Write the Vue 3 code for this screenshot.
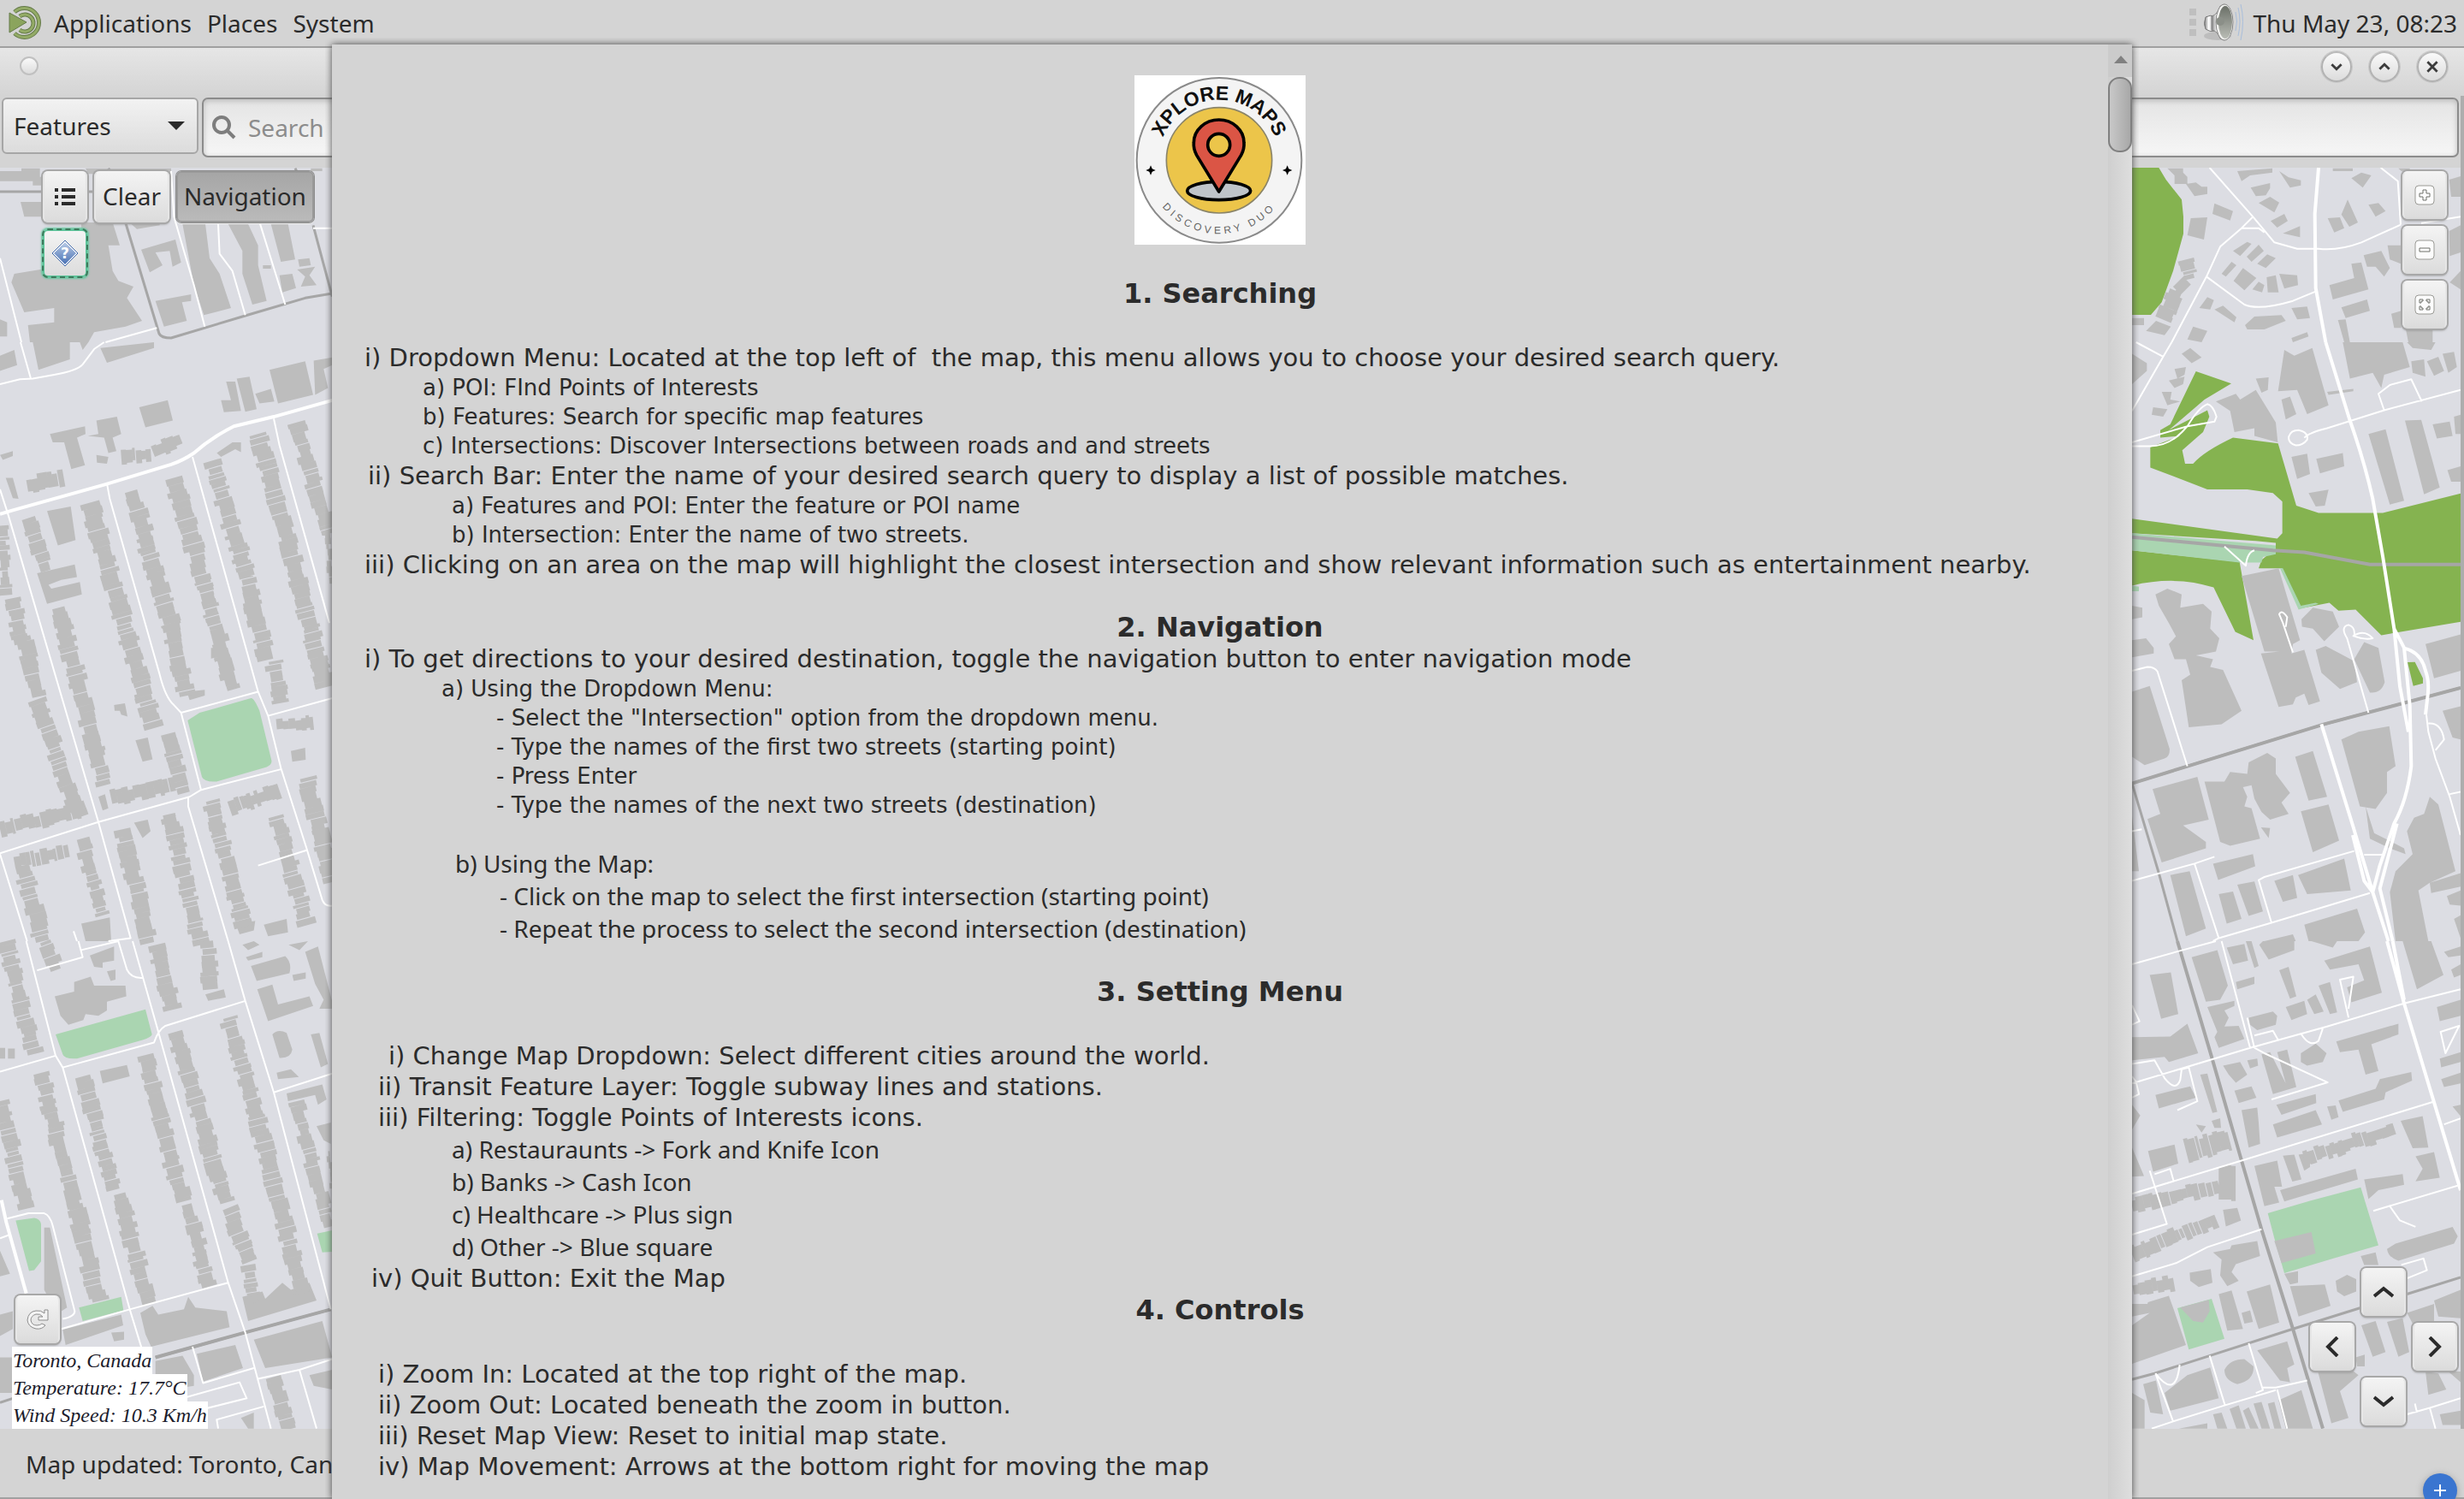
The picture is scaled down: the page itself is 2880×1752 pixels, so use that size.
<script setup>
// Each tile carries its own drawing grid; [originX, originY, scaleX, scaleY].
const grid = {
  a: [0, 0, 1 / 3, 1 / 3],
  b: [0, 400, 1 / 3, 1 / 2.24],
  c: [0, 1100, 1 / 3, 1 / 2.405],
  d: [2440, 0, 1 / 3, 1 / 3],
  e: [2480, 400, 1 / 3, 1 / 2.24],
  f: [2480, 1100, 1 / 3, 1 / 2.405]
}

const tiles = [
  {
    id: 'a',
    buildings:
      'M0 600H75V590H140V620H165V650H115V635H0ZM72 708H150V760H85ZM285 780H395L420 860H380L395 950L415 985L468 1005L445 1045L498 1125L440 1145L330 1165L310 1200H105L98 1140L190 1130V1080L85 1095L40 990L50 960L200 935L205 800H285ZM300 590H600V610H310ZM1090 590H1130V600H1090ZM0 1120L25 1130V1180H0ZM495 875L615 840L635 920L605 935L595 880L545 885L570 930L525 955ZM545 1055L670 1032V1055L638 1060L655 1125L575 1145ZM640 785H720L735 905L770 960L810 1080L715 1105L680 1000ZM800 785H870L905 860V930L935 1055L885 1068L850 960V880ZM950 785H1010L1035 910L985 918ZM980 965L1025 960L1038 1010L990 1025ZM1045 910L1085 905L1090 930L1050 935ZM1042 945L1105 935L1085 965L1110 1000L1055 1005L1070 970ZM922 930H950V942H922ZM460 785H560V790L480 803Z',
    thin: 'M600 600L610 760L680 1000L718 1145M765 785L770 890L815 950L860 1105M912 785L1000 1068M0 905L75 1200M370 1200L550 1150M1098 800H1165',
    grey: 'M0 672H160M305 672H330M440 780L558 1170Q565 1185 600 1185L860 1107L1070 1045L1160 1030M1098 790L1165 1040M380 590L400 620M1035 590L1045 610'
  },
  {
    id: 'b',
    park: 'M658 990L700 970L880 932Q890 930 910 965L952 1095Q955 1105 935 1112L760 1150Q715 1152 708 1138Z',
    buildings:
      'M115 0H245V45L135 72ZM280 0H310L290 20ZM352 15L540 0V15L375 54ZM0 35L50 20L60 60L0 75ZM175 240L298 220L300 240L270 250L298 322L250 332L225 262L185 262ZM308 245L345 240L338 205L410 195L425 240L395 250L408 285L380 290L365 250ZM338 295L380 300L375 318L340 315ZM488 170L588 152L606 205L510 223ZM775 152H810L793 103H825L845 180L785 183ZM830 95L875 90L900 175L860 182ZM895 135L950 122L962 155L910 160ZM945 72L1070 50L1098 138L975 160ZM1100 48L1165 40V60L1135 70L1150 120L1105 138ZM0 295L45 285V298L10 308ZM20 355H45L65 410L45 408ZM165 442L248 430L265 518L203 532ZM130 605L262 582L270 615L215 622L170 635L180 645L280 628L287 660L165 685ZM400 950L438 945L447 980L425 975L420 965L402 965ZM475 1042L518 1035L535 1092L500 1098ZM345 1190L368 1183L380 1220L360 1226ZM760 290L815 262L845 262V288L825 280L775 300ZM1020 1070L1070 1062L1072 1093L1025 1098ZM470 1258L518 1250L528 1280L500 1298ZM285 1522L385 1506L390 1568H300ZM828 1525L895 1515L890 1540L840 1550ZM925 1525L1005 1510L1010 1545L940 1555ZM740 800H790V820L740 828ZM655 915L718 910V925L665 937Z',
    thin: 'M0 110L70 97L115 95L190 85Q270 75 290 58L330 18L365 0M72 0L108 95M0 385L28 450L345 1256L458 1560L380 1568M375 370L385 410L560 870Q580 930 610 950L635 970L705 1172M635 970L905 915M675 300L905 915L940 978L985 1115L1075 1325L1130 1460Q1140 1478 1165 1475M940 978L1165 932M0 1338L345 1256L665 1190L705 1172L985 1118M660 1190V1215L800 1568M960 200L980 270L1155 735M905 1370L1075 1330M0 1340L95 1568M258 1542L270 1568',
    main: 'M0 450L45 440L370 372L600 320Q640 310 680 290Q740 250 820 220L960 195L1165 152',
    rows: [
      [5, 480, 22, 650, 14], [45, 670, 75, 780, 20], [85, 770, 130, 920, 20], [130, 935, 270, 1230, 20], [100, 460, 160, 600, 18], [205, 695, 365, 1150, 21],
      [315, 420, 540, 1010, 22], [590, 1025, 640, 1170, 20], [460, 390, 600, 740, 22], [600, 740, 650, 920, 20], [610, 355, 680, 540, 24], [680, 540, 815, 905, 20],
      [745, 310, 860, 600, 22], [860, 600, 930, 820, 21], [960, 835, 985, 940, 20], [905, 240, 1010, 520, 21], [1010, 520, 1140, 900, 22], [1040, 210, 1150, 500, 19],
      [1150, 500, 1160, 620, 8], [95, 375, 210, 360, 20], [425, 300, 515, 295, 16], [535, 285, 620, 260, 16], [390, 1195, 600, 1160, 18], [0, 1275, 290, 1225, 18],
      [50, 1360, 230, 1335, 16], [970, 1005, 1095, 995, 14], [805, 1220, 980, 1175, 18], [80, 1370, 150, 1568, 21], [285, 1300, 360, 1500, 18], [430, 1275, 520, 1568, 21],
      [595, 1235, 700, 1568, 20], [740, 1200, 855, 1530, 20], [970, 1240, 1070, 1510, 20], [1075, 1140, 1160, 1400, 20]
    ]
  },
  {
    id: 'c',
    park: 'M195 262L510 192L533 262Q530 270 500 278L270 330Q225 332 220 318ZM55 785L120 778Q140 780 144 795V900L120 925L102 927ZM277 1030L425 1000L433 1038L290 1068ZM1112 822L1165 813V873L1130 875Z',
    buildings:
      'M192 155L260 142V115L318 100L330 125L440 125L443 155L375 170V195L345 210L300 205L292 222L240 235L212 210ZM315 40L400 15V55L360 60V75L330 72ZM375 85L405 80V108L388 112ZM0 300H18V330H0ZM28 302H52V330H28ZM155 805H175L235 1030L215 1040L175 1010L155 980ZM850 10L890 0L910 10L870 25ZM862 45L920 30V45L870 55ZM880 70L1000 42Q1025 60 1015 90L900 112ZM1025 95L1072 88V105L1030 112ZM1070 30L1115 15L1165 170V190H1120L1135 165L1105 120ZM902 135L955 122L975 178L1085 155L1098 182L940 225ZM955 262Q975 245 1005 258L1025 305Q1020 330 980 328ZM1090 262L1120 258L1150 345L1125 355ZM970 370L1020 360L1048 382L975 388ZM1005 428L1130 403L1145 445L1115 460L1105 432L1010 450ZM1110 520L1160 510V570L1135 560ZM1012 10L1080 0L1050 25ZM720 150L785 135L792 158L730 168ZM350 365L445 348L455 380L360 400ZM492 1045L535 1025L555 1050L645 1035L660 1000L685 1030L795 1040L805 1085L530 1140L510 1105ZM0 1050L45 1040V1090L0 1110ZM220 1092L425 1050L432 1080L230 1135ZM0 1170H42V1270H0ZM545 1180L640 1165L680 1220V1250L640 1255V1330H545ZM690 1160L825 1135L852 1200L712 1238ZM850 1000L920 985L930 1005L990 960L1020 980L1085 960L1110 1010L870 1068ZM890 1120L1130 1068L1165 1170L930 1200ZM390 1100L435 1098V1120L400 1125ZM1085 1220L1165 1205V1260L1100 1250ZM845 1340L890 1325V1370H870ZM0 870L35 935L0 942Z',
    thin: 'M92 0L195 322L220 355L455 1035L497 1145M0 367L195 322M130 82L290 45L275 0M285 25L415 0L445 80Q460 105 500 103M465 0L550 240L800 960L860 1100L950 1370M220 355L540 285Q555 250 580 238L860 168M800 0L860 168L960 425L1160 1035M960 425L1165 372M215 1090L455 1035L800 960M0 835L35 825M25 780L100 765H155Q175 770 185 800L262 1040Q262 1055 220 1062M675 1140L712 1242L890 1200M905 1230L1050 1205L1165 1175M1050 1205L1110 1370M640 1285L840 1240L865 1285L640 1330M765 1370L760 1345L925 1308',
    main: 'M5 728L22 790L92 990',
    grey: 'M545 1170L860 1100L1160 1035M0 1297L45 1285',
    greyWide: 'M545 1170L860 1100L1160 1035',
    rows: [
      [20, 0, 120, 315, 20], [145, 370, 260, 740, 20], [265, 740, 345, 1010, 22], [0, 450, 90, 740, 20], [290, 380, 400, 700, 20], [420, 710, 515, 1005, 20], [510, 320, 545, 430, 18],
      [545, 440, 640, 730, 21], [655, 740, 730, 960, 19], [550, 10, 605, 195, 20], [615, 255, 790, 730, 21], [800, 750, 870, 890, 21], [870, 910, 890, 1010, 18], [725, 0, 740, 125, 20],
      [800, 215, 900, 490, 20], [900, 490, 1060, 990, 21], [160, 0, 190, 65, 18], [1040, 450, 1150, 800, 17], [960, 1225, 1010, 1370, 20], [1155, 590, 1165, 700, 8]
    ]
  },
  {
    id: 'd',
    wood: 'M155 588H250L275 630L330 700L336 760V820L300 950L260 1060L222 1104H155Z',
    buildings:
      'M280 590H335V605L350 620V645H305V615ZM345 645L380 640L400 655H420V680L375 688ZM445 713L510 740L500 773L438 750ZM362 765L420 762L408 840L350 825ZM525 600L648 590V605L570 615L540 635ZM672 600L705 622L748 632V650L710 658ZM572 658L640 642V660L625 685L590 688ZM600 712L640 690L672 710L655 745ZM642 775L690 750L702 775L665 798ZM685 818L745 793V832ZM510 880L560 848L575 855L535 898ZM558 900L600 858L618 880L575 918ZM595 925L630 892L660 905L625 940ZM470 960L505 918L522 930L485 970ZM512 985L545 940L592 975L550 1018ZM578 1015L600 988L620 1000L612 1025ZM628 972L660 965L670 1025H632ZM672 960L735 965L738 1000L690 1012ZM925 625L960 605L995 615L965 658ZM842 765L885 762L900 800L865 815ZM890 752L912 700L948 780L918 795ZM985 718L1020 712L1045 740L1010 760ZM968 895L1030 880L1060 940L1040 970L1010 935L980 935ZM1052 860H1098V925L1060 910ZM848 1000L935 975L925 925L960 920L985 1015L860 1050ZM890 1078L980 1050L990 1090L905 1115ZM1065 1100L1100 1090V1150H1075ZM1268 630L1308 618V690L1275 690ZM1268 810L1308 790V885L1270 898ZM1270 990L1308 950V1015ZM878 1122L905 1120L920 1200H900ZM1115 1150H1210V1200H1125ZM392 1080L420 1042L443 1052L430 1085ZM445 1085L475 1072L522 1112L515 1130ZM552 1140L585 1110L680 1105L695 1125L620 1155H560ZM715 1080L770 1075L780 1115L735 1120ZM350 1190L370 1145L420 1160L400 1200ZM205 1160L240 1125L292 1145L270 1175ZM715 1185L770 1165L775 1180L720 1200ZM155 1115H198V1140H155ZM860 590H930V600H860ZM1090 590H1130V600H1100Z',
    thin: 'M428 588L580 760L655 850L735 872H810Q880 880 960 850L1098 788M580 760L540 800L465 865L417 970L295 1200M540 800H600L620 815M417 970L550 1068Q600 1090 720 1055L800 1022M1028 588L1088 635L1098 788M1170 782L1308 760',
    main: 'M810 588L797 750L800 1010L835 1200',
    rows: [[345, 910, 360, 970, 16], [320, 985, 340, 1005, 20], [310, 1020, 270, 1115, 20]]
  },
  {
    id: 'e',
    wood: 'M260 76L384 108L290 150L165 230L300 178L307 195L285 235L212 283L222 318H250Q290 285 390 250L548 265L612 428L690 447H915L1188 396V732L910 767L820 700L760 703L728 682L625 697L562 592H480L490 570L540 540V525L470 520L36 500V462L545 514L563 500V417L530 395L440 385H300L100 328V275L205 245L135 250V230L170 215ZM36 545L413 575L462 780L398 758L322 642Q190 610 36 637ZM1002 838L1028 837L1056 880V893L1022 900Z',
    park: 'M36 500L540 532V555L495 562L490 577H413L36 545ZM36 637L60 640V652H36ZM555 592H565L628 690L680 682L690 685L620 700Z',
    buildings:
      'M210 30L240 15L280 40L245 55ZM36 30L88 55V75L36 110ZM185 70L225 65L220 85L195 95ZM165 100L220 90L215 110L185 120ZM140 130H175L170 150L205 155L160 165ZM110 170L160 175L145 195L105 190ZM470 95L515 92L512 125L490 132ZM330 155L400 135L415 150L470 125L540 210L547 262L465 245V225L395 235L380 180ZM570 20L605 35L668 15L725 165L650 188L615 125L548 128ZM720 130L812 122V128L725 138ZM560 150L590 142L612 188L575 202ZM775 0H985L1010 65L920 85L910 120L880 80L800 95ZM1000 0H1100L1085 20L1020 15ZM1015 50L1060 45L1065 90L1020 80ZM1070 50L1110 38L1130 75L1095 88ZM1125 30L1165 25L1175 65L1145 80ZM595 300L650 292L660 345L615 358ZM682 305L775 290L780 325L695 343ZM655 395L725 386L712 428L680 430ZM865 240L925 228L990 415L940 425ZM993 205L1050 203L1115 380L1060 398ZM1090 215L1150 208L1160 245L1105 252ZM1142 335L1188 325V365H1155ZM1165 195L1188 190V240H1170ZM420 612L550 592L625 780L600 790L595 815L640 805L695 940L655 950L640 920L610 930L600 948L550 955L488 815L552 810L500 810ZM118 660L160 645L210 660L205 695L285 685L315 705L310 750L342 775L330 810L260 820L320 830L310 850L355 858L420 965L350 1000L235 1008L210 885L240 870L225 830L185 830L165 790L190 770L165 735L130 690ZM36 690L72 695V720L36 725ZM36 780L85 775L112 800V815L36 825ZM630 725L670 695L740 705L762 745L710 783L670 750L632 745ZM680 805L715 795L815 835L825 890L765 908L700 865ZM815 830L850 785L900 800L922 890Q910 920 870 917ZM1065 790L1188 765V860L1095 880ZM36 915L98 900L168 1065Q168 1085 150 1090L80 1107L36 1085ZM1125 965L1188 953V1040L1160 1035ZM770 1040L830 1020L938 1005L960 1110L930 1125V1180L890 1222L835 1215ZM108 1170L265 1138L305 1250L215 1265L295 1308V1325L140 1362L90 1248L135 1235ZM290 1150L360 1150L380 1125L440 1130L445 1100L510 1075L540 1090V1130L590 1180L560 1205L585 1235L520 1250L490 1230L465 1195L455 1160L425 1165L440 1190L430 1215L455 1220L485 1300L380 1318L345 1308ZM608 1085L670 1070L720 1190L655 1200ZM628 1228L725 1210L762 1305L670 1335ZM488 1270L520 1272L515 1298ZM855 1215L885 1285L990 1325L995 1340L940 1325L870 1300ZM1000 1280L1025 1245L1060 1235L1080 1190L1110 1210L1170 1385L1080 1415L1040 1435L1075 1568H960L940 1440L960 1385L1020 1340ZM320 1365L460 1340L468 1372L338 1408ZM170 1395L238 1385L295 1535L225 1555ZM340 1445L390 1438L420 1510L368 1522ZM405 1420L465 1412L495 1490L445 1502ZM535 1410L600 1395L615 1455L565 1465ZM618 1395L780 1352L803 1435L650 1445ZM640 1525L825 1483L853 1545L830 1568H655ZM1080 1415L1188 1390V1425L1085 1442ZM1140 1450L1188 1435V1475L1150 1472ZM36 1240L60 1385H36ZM500 1568L600 1550L610 1568ZM1165 1510L1188 1500V1560Z',
    thin: 'M50 0L145 38L36 180M175 0L145 38M36 262L230 220L325 208L332 195Q320 165 300 162Q270 170 230 220Q170 275 90 272H36M640 250Q660 235 720 225L920 178L1188 125M920 178L900 135L940 112L1015 97L1052 155M36 860L90 850Q115 850 125 862L230 1110M360 535L435 585Q440 550 465 545M600 812L565 735L552 712Q560 698 580 720L575 745M865 970L790 775Q765 745 795 740Q820 745 815 770M810 770Q850 750 880 775Q850 780 810 768M1068 975L1075 1020L1100 1090L1150 1190L1188 1290M1075 998Q1120 995 1130 1040L1100 1068M1150 1183L1188 1177M36 1410L255 1365L325 1347M255 1365L340 1560L320 1568M340 1560L525 1520L870 1442M525 1520L480 1408L500 1400L815 1332M850 1342H920M36 1280L70 1275',
    loops: 'M585 250Q590 230 620 230Q655 235 650 255Q635 270 610 270Q585 265 585 250',
    main: 'M715 0L800 205Q850 310 880 410L915 560L955 750L975 900L1005 1020M955 750L990 800L1010 950L1015 1110Q1000 1200 955 1260L905 1370L880 1440M985 800Q1050 810 1065 860Q1080 890 1072 930L1065 975M700 1000L810 1265L880 1440L935 1568M810 1290L850 1410L880 1440M965 1260L905 1430L950 1568',
    grey: 'M36 1155L230 1110L710 1000L860 970L1188 905M36 1155L130 1390L195 1568',
    greyWide: 'M36 510L530 545L640 550L870 582H1188M36 1155L230 1110L710 1000L1188 905'
  },
  {
    id: 'f',
    park: 'M512 765L660 730L838 692L900 855L740 892L570 933L535 835ZM195 1032L315 1005L360 1118L235 1148Z',
    buildings:
      'M245 45L335 25L372 125L345 165L295 170ZM368 18L430 8L443 55L390 65ZM435 0L455 0L480 70L465 75ZM482 10L495 0H605V25L515 52ZM400 115L465 100V120L405 135ZM98 95L172 88L198 205L138 218ZM36 270L170 268L230 232L268 315L165 340L150 325L36 335ZM300 185L395 168V182L360 195L375 215L360 240L410 238L430 275L340 300L325 270L335 255ZM552 82L585 72L612 155L590 162ZM575 185L640 168L650 205L595 222ZM650 165L680 150L708 198L675 205ZM690 125L730 115L755 200L730 205ZM710 55L870 15L912 145L805 172L790 130L850 110L830 65L730 80ZM445 215L530 198L545 210L540 235L475 250L450 235ZM665 0L755 0L740 18ZM985 0H1085L1128 95L1035 135ZM1130 30L1188 15V40L1145 45ZM1155 80L1188 65V95L1165 102ZM1105 185L1188 165V210L1115 225ZM1115 330L1188 312V340L1120 355ZM1120 388L1188 370V400L1130 410ZM1160 465L1188 460V492ZM118 432L240 408L260 440L130 470ZM275 375L300 372L335 480L318 483ZM355 350L415 340L440 375L400 398L375 375ZM395 420L455 408L472 440L410 455ZM440 335L475 330L478 350L450 358ZM490 318L520 312L575 400L545 312L580 305L612 410L530 430ZM628 315L680 288L718 315L705 340L650 350L628 340ZM752 282L970 232V262L875 290L900 365L855 375L830 305L765 312ZM760 448L890 415L905 388L1015 368L1018 392L925 425L920 445L775 480ZM542 460L680 430L682 455L560 488ZM530 515L680 475L702 515L545 552ZM720 465L750 462L760 495L735 502ZM420 475L475 468L480 510L485 570L445 580ZM92 590L185 572L198 625L110 648ZM36 460L65 490L36 530ZM36 580L78 660L36 662ZM465 632L545 617L562 690L535 690L552 735L500 745ZM565 603L605 600L630 670L598 676ZM620 600L660 595V635L640 645ZM555 700L820 640L828 670L570 732ZM850 670L985 655L990 685L900 700L865 725ZM978 505L1055 492L1075 580L1020 582ZM1030 605L1095 593L1115 665L1030 675L1055 640ZM260 515L295 520L280 538ZM315 505L345 498L348 525H325ZM355 755L405 750L418 785L365 802ZM535 843L665 818L680 878L560 905ZM320 875L380 865L385 855L475 843L485 885L400 908L385 930L410 955L370 970L345 940L350 895ZM238 932L312 922L318 960L270 972L240 955ZM205 1030L305 1008L308 1040L285 1072L250 1068ZM92 1015L165 997L182 1035L225 1135L36 1188V1080L98 1045L36 1055V1020L90 1020ZM340 992L385 982L425 1090L370 1095ZM420 1045L450 1038L460 1070L430 1075ZM438 985L520 965L552 1072L480 1090ZM590 970L712 965L732 1025L620 1055ZM750 955L790 938L822 950V985L780 998L755 985ZM570 935L618 928V960L590 965ZM930 865L960 850L1160 803L1178 830L1165 850L970 898Q935 890 930 865ZM838 885L890 875L900 910H850ZM1000 1045L1095 1020V1070L1020 1075ZM1095 1010L1188 980V1060L1110 1055ZM840 1080L890 1068L925 1155L880 1168ZM930 1070L985 1060L1008 1155L970 1168ZM360 1205Q380 1175 430 1175L462 1195Q465 1235 405 1245Q360 1235 360 1205ZM475 1150L580 1125L605 1190L580 1200L590 1240L555 1235ZM150 1270L230 1220L310 1198L340 1285L170 1320ZM75 1245L120 1235L145 1330L100 1325ZM36 1270L80 1290V1370H36ZM655 1110L830 1220L765 1265L795 1340L735 1355ZM820 1170L852 1162V1195H825ZM550 1290L630 1262L670 1370H575ZM320 1330L350 1325L370 1370H335ZM378 1315L410 1305L435 1370H402ZM425 1320L445 1310L480 1370H450ZM462 1300L490 1295L520 1370H490ZM512 1300L535 1295L560 1370H535ZM1065 1210L1110 1215L1138 1260L1075 1275ZM1115 1330L1188 1320V1360H1125ZM1145 1210H1188V1240ZM200 1370L300 1355V1370Z',
    thin: 'M36 65L200 28L330 0M350 0L450 300M440 215L465 300M36 400L450 300L720 240L990 175L1188 135M465 300L500 315L722 397L525 445M465 265L530 252L550 280M630 262Q660 300 690 280L705 245M795 215L765 108L812 100L795 190M1118 255L1183 238L1135 315ZM36 345L115 335L150 385Q190 425 205 390L210 360L235 355L265 450L195 475M36 180L62 225L36 235M36 440L60 430L50 395L36 380M36 710L420 617L1090 452M1130 515L1188 498M98 645L158 795L36 825M115 655L170 640L182 675M36 942L190 905L300 860L490 810M882 758L1188 685M940 745L975 785L1030 803M980 910L1058 892L1070 925L1000 948M445 1130L495 1262L470 1270M495 1255H540L650 1235M545 1260L580 1370M308 1165L362 1305M105 1370L180 1350L360 1305L540 1262M118 1215L180 1350M118 1215Q190 1290 203 1190M1000 1330L1080 1312L1188 1285M1080 1312L1100 1370M1028 1300L1035 1325',
    main: 'M930 0L990 175L1090 440L1188 700M950 0L990 165',
    grey: 'M36 1232L115 1215L310 1165L600 1090L840 1030M1000 992L1188 945',
    greyWide: 'M195 0L315 325L420 617L490 810L600 1090L705 1370',
    rows: [
      [225, 590, 370, 560, 26], [640, 610, 950, 530, 18], [36, 745, 320, 690, 18], [36, 880, 320, 785, 18], [340, 680, 400, 680, 40], [40, 980, 180, 960, 17]
    ]
  }
]

function random(seed) {
  let s = seed
  return () => {
    s = (s * 16807) % 2147483647
    return s / 2147483647
  }
}

// A terrace of narrow houses with an uneven outline along one street.
function terrace([x1, y1, x2, y2, width], [ox, oy, sx, sy], seed) {
  const ax = ox + x1 * sx
  const ay = oy + y1 * sy
  const dx = (x2 - x1) * sx
  const dy = (y2 - y1) * sy
  const length = Math.hypot(dx, dy)
  const ux = dx / length
  const uy = dy / length
  const next = random(seed)
  let path = ''
  for (let at = 0; at < length; ) {
    const depth = 4 + next() * 5
    const left = width / 2 - 4 + next() * 6
    const right = width / 2 - 4 + next() * 6
    const end = at + depth - (next() > 0.7 ? 1 : 0)
    const point = (along, side) =>
      `${(ax + ux * along - uy * side).toFixed(1)} ${(ay + uy * along + ux * side).toFixed(1)}`
    path += `M${point(at, left)}L${point(end, left)}L${point(end, -right)}L${point(at, -right)}Z`
    at += depth
  }
  return path
}

const layers = tiles.map((tile) => {
  const [ox, oy, sx, sy] = grid[tile.id]
  return {
    ...tile,
    transform: `translate(${ox} ${oy}) scale(${sx} ${sy})`,
    houses: (tile.rows || []).map((row, i) => terrace(row, grid[tile.id], 7919 * (i + 3))).join('')
  }
})

const sections = [
  {
    title: '1. Searching',
    spaced: true,
    lines: [
      ['big', 38, 'i) Dropdown Menu: Located at the top left of  the map, this menu allows you to choose your desired search query.'],
      ['small', 106, 'a) POI: FInd Points of Interests'],
      ['small', 106, 'b) Features: Search for specific map features'],
      ['small', 106, 'c) Intersections: Discover Intersections between roads and and streets'],
      ['big', 42, 'ii) Search Bar: Enter the name of your desired search query to display a list of possible matches.'],
      ['small', 140, 'a) Features and POI: Enter the feature or POI name'],
      ['small', 140, 'b) Intersection: Enter the name of two streets.'],
      ['big', 38, 'iii) Clicking on an area on the map will highlight the closest intersection and show relevant information such as entertainment nearby.']
    ]
  },
  {
    title: '2. Navigation',
    lines: [
      ['big', 38, 'i) To get directions to your desired destination, toggle the navigation button to enter navigation mode'],
      ['small', 128, 'a) Using the Dropdown Menu:'],
      ['small', 192, '- Select the "Intersection" option from the dropdown menu.'],
      ['small', 192, '- Type the names of the first two streets (starting point)'],
      ['small', 192, '- Press Enter'],
      ['small', 192, '- Type the names of the next two streets (destination)'],
      ['blank', 0, ''],
      ['ui', 144, 'b) Using the Map:'],
      ['ui', 196, '- Click on the map to select the first intersection (starting point)'],
      ['ui', 196, '- Repeat the process to select the second intersection (destination)']
    ]
  },
  {
    title: '3. Setting Menu',
    spaced: true,
    lines: [
      ['big', 66, 'i) Change Map Dropdown: Select different cities around the world.'],
      ['big', 54, 'ii) Transit Feature Layer: Toggle subway lines and stations.'],
      ['big', 54, 'iii) Filtering: Toggle Points of Interests icons.'],
      ['ui', 140, 'a) Restauraunts -> Fork and Knife Icon'],
      ['ui', 140, 'b) Banks -> Cash Icon'],
      ['ui', 140, 'c) Healthcare -> Plus sign'],
      ['ui', 140, 'd) Other -> Blue square'],
      ['big', 46, 'iv) Quit Button: Exit the Map']
    ]
  },
  {
    title: '4. Controls',
    spaced: true,
    tight: true,
    lines: [
      ['big', 54, 'i) Zoom In: Located at the top right of the map.'],
      ['big', 54, 'ii) Zoom Out: Located beneath the zoom in button.'],
      ['big', 54, 'iii) Reset Map View: Reset to initial map state.'],
      ['big', 54, 'iv) Map Movement: Arrows at the bottom right for moving the map']
    ]
  }
]

const weather = ['Toronto, Canada', 'Temperature: 17.7°C', 'Wind Speed: 10.3 Km/h']
</script>

<template>
  <div class="desktop">
    <header class="panel">
      <nav class="menus">
        <svg class="mate" viewBox="0 0 40 40" aria-hidden="true">
          <g fill="none" stroke="#657a4a" stroke-width="5">
            <path d="M7 7A17 17 0 1 1 7 32" />
            <path d="M13 12A10 10 0 1 1 13 28" />
          </g>
          <g fill="none" stroke="#93ab66" stroke-width="3">
            <path d="M7 7A17 17 0 1 1 7 32" />
            <path d="M13 12A10 10 0 1 1 13 28" />
          </g>
          <path d="M1 8L21 19L1 31Z" fill="#8ba45d" stroke="#657a4a" />
        </svg>
        <a href="#">Applications</a>
        <a href="#">Places</a>
        <a href="#">System</a>
      </nav>
      <div class="tray">
        <svg class="grip" viewBox="0 0 8 34" aria-hidden="true">
          <path d="M0 0h8v8H0zM0 12h8v8H0zM0 24h8v8H0z" fill="#bfbfbf" />
        </svg>
        <svg class="speaker" viewBox="0 0 48 46" aria-hidden="true">
          <defs>
            <linearGradient id="cone" x1="0" x2="1"><stop offset="0" stop-color="#777" /><stop offset=".4" stop-color="#fff" /><stop offset="1" stop-color="#999" /></linearGradient>
            <linearGradient id="bell" x1="0" y1="0" x2="0" y2="1"><stop offset="0" stop-color="#6b7068" /><stop offset="1" stop-color="#b9bcb5" /></linearGradient>
          </defs>
          <ellipse cx="17" cy="38" rx="16" ry="5" fill="#bdbdbd" />
          <path d="M3 16Q8 13 14 15V32Q8 34 3 30Q0 24 3 16Z" fill="url(#cone)" stroke="#777" />
          <path d="M10 15Q17 13 20 3L25 1V43L20 41Q17 32 10 31Z" fill="url(#cone)" stroke="#888" />
          <ellipse cx="25" cy="22" rx="10" ry="21" fill="#f0f0ee" stroke="#888" />
          <ellipse cx="26" cy="22" rx="8" ry="19" fill="url(#bell)" />
          <circle cx="20" cy="21" r="5" fill="#8b8f88" />
          <g fill="none" stroke="#a9bedb"><path d="M38 10Q41 21 38 32" /><path d="M41 5Q45 21 41 38" /><path d="M44 1Q49 21 44 43" /></g>
        </svg>
        <time>Thu May 23, 08:23</time>
      </div>
    </header>

    <div class="titlebar">
      <button class="orb small-orb" aria-label="Window menu"></button>
      <div class="orbs">
        <button class="orb" aria-label="Minimize"><svg viewBox="0 0 34 34"><path d="M11 14l6 6 6-6" /></svg></button>
        <button class="orb" aria-label="Maximize"><svg viewBox="0 0 34 34"><path d="M11 20l6-6 6 6" /></svg></button>
        <button class="orb" aria-label="Close"><svg viewBox="0 0 34 34"><path d="M11 11l12 12M23 11L11 23" /></svg></button>
      </div>
    </div>

    <main class="window">
      <div class="toolbar">
        <label class="picker">
          <select aria-label="Search type"><option>Features</option><option>POI</option><option>Intersections</option></select>
          <svg viewBox="0 0 20 10" aria-hidden="true"><path d="M0 0h20L10 10z" fill="#2b2b2b" /></svg>
        </label>
        <label class="search">
          <svg viewBox="0 0 28 28" aria-hidden="true"><circle cx="11" cy="11" r="9" /><path d="M17 17l9 9" /></svg>
          <input type="text" placeholder="Search" aria-label="Search" />
        </label>
      </div>

      <div class="map">
        <svg class="canvas" viewBox="0 196 2876 1474" preserveAspectRatio="xMidYMid slice" aria-hidden="true">
          <g v-for="tile in layers" :key="tile.id">
            <g :transform="tile.transform">
              <path v-if="tile.wood" :d="tile.wood" class="wood" />
              <path v-if="tile.park" :d="tile.park" class="park" />
              <path :d="tile.buildings" class="building" />
            </g>
            <path v-if="tile.houses" :d="tile.houses" class="building" />
            <g :transform="tile.transform" class="roads">
              <path v-if="tile.grey" :d="tile.grey" class="grey" />
              <path v-if="tile.greyWide" :d="tile.greyWide" class="grey wide" />
              <path :d="tile.thin" class="thin" />
              <path v-if="tile.loops" :d="tile.loops" class="thin" />
              <path v-if="tile.main" :d="tile.main" class="thoroughfare" />
            </g>
          </g>
        </svg>

        <div class="tools">
          <button class="btn square" aria-label="Layers">
            <svg viewBox="0 0 24 20" class="glyph list"><path d="M0 0h4v4H0zM8 0h16v4H8zM0 8h4v4H0zM8 8h16v4H8zM0 16h4v4H0zM8 16h16v4H8z" fill="#2b2b2b" /></svg>
          </button>
          <button class="btn">Clear</button>
          <button class="btn pressed">Navigation</button>
        </div>
        <button class="btn square help" aria-label="Help">
          <svg viewBox="0 0 32 32" class="diamond">
            <defs><linearGradient id="dia" x1="0" y1="0" x2="0" y2="1"><stop offset="0" stop-color="#b9cbe6" /><stop offset="1" stop-color="#4a72b4" /></linearGradient></defs>
            <path d="M16 1L31 16L16 31L1 16Z" fill="#fff" stroke="#3e66a8" stroke-linejoin="round" />
            <path d="M16 3L29 16L16 29L3 16Z" fill="url(#dia)" />
            <text x="16" y="22" text-anchor="middle">?</text>
          </svg>
        </button>

        <div class="zoom">
          <button class="btn square" aria-label="Zoom in"><svg viewBox="0 0 24 24"><rect x="1" y="1" width="22" height="22" rx="4" /><path d="M10 6h4v4h4v4h-4v4h-4v-4H6v-4h4z" /></svg></button>
          <button class="btn square" aria-label="Zoom out"><svg viewBox="0 0 24 24"><rect x="1" y="1" width="22" height="22" rx="4" /><path d="M6 10h12v4H6z" /></svg></button>
          <button class="btn square" aria-label="Zoom to fit"><svg viewBox="0 0 24 24"><rect x="1" y="1" width="22" height="22" rx="4" /><path d="M6 6h4v2H8v2H6zM18 6h-4v2h2v2h2zM6 18h4v-2H8v-2H6zM18 18h-4v-2h2v-2h2z" /></svg></button>
        </div>

        <div class="pan">
          <button class="btn up" aria-label="Up"><svg viewBox="0 0 24 24"><path d="M1 17l11-9 11 9" /></svg></button>
          <button class="btn left" aria-label="Left"><svg viewBox="0 0 24 24"><path d="M18 1L7 12l11 11" /></svg></button>
          <button class="btn right" aria-label="Right"><svg viewBox="0 0 24 24"><path d="M6 1l11 11L6 23" /></svg></button>
          <button class="btn down" aria-label="Down"><svg viewBox="0 0 24 24"><path d="M1 7l11 9 11-9" /></svg></button>
        </div>

        <div class="conditions">
          <button class="btn refresh" aria-label="Refresh">
            <svg viewBox="0 0 28 28"><path d="M22 5V3h4v12H15v-4h5Q17 7 12 8Q6 10 6 15Q7 21 13 21Q17 21 19 19L23 21Q19 26 12 25Q3 23 2 15Q3 5 12 4Q18 3 22 7Z" /></svg>
          </button>
          <p v-for="line in weather" :key="line"><span>{{ line }}</span></p>
        </div>
      </div>
    </main>

    <footer class="status">
      <span>Map updated: Toronto, Canada</span>
    </footer>
    <button class="add" aria-label="Add"><svg viewBox="0 0 40 40"><path d="M20 13v14M13 20h14" /></svg></button>

    <section class="dialog" role="dialog" aria-label="Help">
      <div class="content">
        <svg class="logo" viewBox="0 0 600 594" role="img" aria-label="Xplore Maps">
          <defs>
            <path id="arc-top" d="M85 298A212 212 0 0 1 509 298" />
            <path id="arc-bottom" d="M39 298A258 258 0 0 0 555 298" />
          </defs>
          <rect width="600" height="594" fill="#fff" />
          <circle cx="297" cy="298" r="289" fill="#f4f4f4" stroke="#8a8a8a" stroke-width="6" />
          <circle cx="297" cy="298" r="185" fill="#ecc54a" stroke="#8a8468" stroke-width="5" />
          <ellipse cx="296" cy="405" rx="111" ry="32" fill="#bfc4c9" stroke="#000" stroke-width="11" />
          <path d="M296 408L218 280Q206 258 208 236A88 80 0 0 1 384 236Q386 258 374 280Z" fill="#db5545" stroke="#000" stroke-width="11" stroke-linejoin="round" />
          <circle cx="296" cy="244" r="39" fill="#ecc54a" stroke="#000" stroke-width="11" />
          <path d="M57 316l5 12 12 5-12 5-5 12-5-12-12-5 12-5zM536 316l5 12 12 5-12 5-5 12-5-12-12-5 12-5z" />
          <text class="brand"><textPath href="#arc-top" startOffset="50%">XPLORE MAPS</textPath></text>
          <text class="tagline"><textPath href="#arc-bottom" startOffset="50%">DISCOVERY DUO</textPath></text>
        </svg>
        <article v-for="section in sections" :key="section.title" :class="{ spaced: section.spaced, tight: section.tight }">
          <h2>{{ section.title }}</h2>
          <p v-for="([kind, indent, text], i) in section.lines" :key="i" :class="kind" :style="{ paddingLeft: indent + 'px' }">{{ text }}</p>
        </article>
      </div>
      <div class="scrollbar">
        <svg viewBox="0 0 28 38" aria-hidden="true"><path d="M7 22L15 13L23 22Z" fill="#808080" /></svg>
        <div class="thumb"></div>
      </div>
    </section>
  </div>
</template>

<style>
body {
  margin: 0;
  overflow: hidden;
}
</style>

<style scoped>
* {
  box-sizing: border-box;
}
.desktop {
  position: relative;
  display: flex;
  flex-direction: column;
  height: 100vh;
  overflow: hidden;
  background: #d4d4d4;
  color: #2b2b2b;
  font-family: "Noto Sans", "Open Sans", sans-serif;
  font-size: 28px;
}
button,
select,
input {
  font: inherit;
  color: inherit;
}
button {
  padding: 0;
}
p,
h2 {
  margin: 0;
}
.panel {
  display: flex;
  justify-content: space-between;
  align-items: center;
  height: 56px;
  flex: none;
  padding: 0 8px 0 10px;
  border-bottom: 2px solid #a0a0a0;
}
.menus,
.tray {
  display: flex;
  align-items: center;
}
.menus a {
  margin-right: 18px;
  color: inherit;
  text-decoration: none;
}
.mate {
  width: 40px;
  height: 40px;
  margin-right: 13px;
}
.grip {
  width: 8px;
  height: 34px;
  margin-right: 8px;
}
.speaker {
  width: 48px;
  height: 46px;
  margin-right: 10px;
}
.titlebar {
  display: flex;
  justify-content: space-between;
  height: 56px;
  flex: none;
  padding: 4px 19px 0 23px;
  background: linear-gradient(#e6e6e6, #d4d4d4);
}
.orbs {
  display: flex;
  gap: 20px;
}
.orb {
  width: 36px;
  height: 36px;
  border: 2px solid #b2b2b2;
  border-top-color: #bbb;
  border-radius: 50%;
  background: linear-gradient(#fafafa, #dcdcdc);
  box-shadow: 0 0 0 1px #c8c8c8;
}
.orb svg {
  display: block;
  width: 32px;
  height: 32px;
  fill: none;
  stroke: #3c3c3c;
  stroke-width: 3;
}
.small-orb {
  width: 22px;
  height: 22px;
  margin-top: 6px;
  border-color: #c0c0c0;
  box-shadow: none;
}
.window {
  display: flex;
  flex: 1;
  flex-direction: column;
  min-height: 0;
  border-right: 4px solid #adadad;
}
.toolbar {
  display: flex;
  gap: 4px;
  height: 84px;
  flex: none;
  padding: 2px;
}
.picker {
  position: relative;
  width: 230px;
  height: 66px;
}
.picker select {
  width: 100%;
  height: 100%;
  padding: 0 12px;
  border: 2px solid #a6a6a6;
  border-radius: 6px;
  appearance: none;
  background: linear-gradient(#f2f2f2, #dcdcdc);
}
.picker svg {
  position: absolute;
  top: 28px;
  right: 16px;
  width: 20px;
  height: 10px;
}
.search {
  display: flex;
  align-items: center;
  flex: 1;
  gap: 14px;
  height: 70px;
  padding: 0 10px;
  border: 2px solid #8c8c8c;
  border-radius: 7px;
  background: linear-gradient(#e4e4e4, #f6f6f6);
  box-shadow: inset 0 2px 6px #bbb;
}
.search svg {
  width: 28px;
  height: 28px;
  fill: none;
  stroke: #7d7d7d;
  stroke-width: 4;
}
.search input {
  flex: 1;
  min-width: 0;
  padding: 0;
  border: 0;
  outline: 0;
  background: none;
}
.search input::placeholder {
  color: #8c8c8c;
}
.map {
  position: relative;
  flex: 1;
  min-height: 0;
  overflow: hidden;
  background: #dcdde3;
}
.canvas {
  display: block;
  width: 100%;
  height: 100%;
}
.building {
  fill: #bdbdbd;
}
.park {
  fill: #aad5b1;
}
.wood {
  fill: #85b350;
}
.roads path {
  fill: none;
  stroke: #fff;
  stroke-width: 2px;
  stroke-linejoin: round;
  vector-effect: non-scaling-stroke;
}
.roads .thoroughfare {
  stroke-width: 4px;
}
.roads .grey {
  stroke: #a6a6a6;
  stroke-width: 3px;
}
.roads .wide {
  stroke-width: 4px;
}
.btn {
  display: flex;
  align-items: center;
  justify-content: center;
  height: 60px;
  padding: 0 8px 2px;
  border: 2px solid #fafafa;
  border-color: #f4f4f4 #e6e6e6 #dadada;
  border-radius: 6px;
  background: linear-gradient(#f3f3f3, #dcdcdc);
  box-shadow: 0 0 0 2px #a8a8a8, 0 2px 3px #888;
}
.square {
  width: 52px;
  padding: 0;
}
.pressed {
  padding: 0 7px 2px;
  border-color: #9a9a9a;
  background: linear-gradient(#a6a6a6, #bababa);
  box-shadow: 0 0 0 1px #8c8c8c, 0 2px 1px #eee;
}
.tools {
  position: absolute;
  top: 4px;
  left: 50px;
  display: flex;
  gap: 8px;
}
.list {
  width: 24px;
  height: 20px;
}
.help {
  position: absolute;
  top: 72px;
  left: 50px;
  height: 56px;
  border: 2px solid #5dc49a;
  outline: 2px dashed #3d7a5c;
  outline-offset: -1px;
  box-shadow: 0 0 2px 2px #6cc8a2;
}
.diamond {
  width: 32px;
  height: 32px;
}
.diamond text {
  fill: #fff;
  font: bold 17px "DejaVu Sans", sans-serif;
}
.zoom {
  position: absolute;
  top: 4px;
  right: 16px;
  display: flex;
  flex-direction: column;
  gap: 8px;
}
.zoom .btn {
  height: 56px;
}
.zoom svg {
  width: 24px;
  height: 24px;
  fill: #fcfcfc;
  stroke: #9a9a95;
}
.zoom svg path {
  stroke: #6f706a;
}
.pan {
  position: absolute;
  right: 4px;
  bottom: 4px;
  display: grid;
  grid-template-columns: 52px 52px 52px;
  gap: 8px;
}
.pan .btn,
.refresh {
  width: 52px;
  height: 56px;
  padding: 0;
}
.pan svg {
  width: 24px;
  height: 24px;
  fill: none;
  stroke: #2b2b2b;
  stroke-width: 4;
}
.up,
.down {
  grid-column: 2;
}
.left {
  grid-column: 1;
}
.right {
  grid-column: 3;
}
.conditions {
  position: absolute;
  bottom: 0;
  left: 14px;
  color: #1c1c2c;
  font: italic 24px/32px "Liberation Serif", serif;
}
.conditions span {
  display: inline-block;
  height: 32px;
  padding: 0 1px;
  background: #fff;
}
.conditions p {
  height: 32px;
}
.refresh {
  margin: 0 4px 4px;
}
.refresh svg {
  width: 28px;
  height: 28px;
  fill: #f4f4f4;
  stroke: #8d8d8d;
}
.status {
  display: flex;
  align-items: center;
  height: 82px;
  flex: none;
  padding: 2px 30px 0;
  border-bottom: 2px solid #a0a0a0;
}
.add {
  position: absolute;
  right: 8px;
  bottom: -10px;
  width: 40px;
  height: 40px;
  border: 0;
  border-radius: 50%;
  background: #3a75d0;
  box-shadow: 0 2px 8px #999;
}
.add svg {
  display: block;
  stroke: #fff;
  stroke-width: 2;
}
.dialog {
  position: absolute;
  top: 52px;
  right: 388px;
  bottom: 0;
  left: 388px;
  display: flex;
  overflow: hidden;
  background: #d4d4d4;
  box-shadow: 0 0 8px #444;
  clip-path: inset(-8px -8px 0 -8px);
}
.content {
  flex: 1;
  min-width: 0;
  padding-top: 36px;
  font-family: "DejaVu Sans", sans-serif;
  white-space: pre;
}
.logo {
  display: block;
  width: 200px;
  height: 198px;
  margin: 0 auto 2px;
}
.logo text {
  text-anchor: middle;
  font-family: "Liberation Sans", Arial, sans-serif;
}
.logo .brand {
  fill: #111;
  font-size: 69px;
  font-weight: bold;
}
.logo .tagline {
  fill: #666;
  font-size: 36px;
  letter-spacing: 12px;
}
h2 {
  font-size: 32px;
  font-weight: bold;
  line-height: 38px;
  text-align: center;
}
article {
  padding-top: 36px;
}
.spaced h2 {
  margin-bottom: 38px;
}
.tight {
  padding-top: 0;
}
.big {
  font-size: 29px;
  line-height: 36px;
}
.small {
  font-size: 26px;
  line-height: 34px;
}
.blank {
  height: 32px;
}
.ui {
  font-family: "Noto Sans", "Open Sans", sans-serif;
  font-size: 28px;
  line-height: 38px;
}
.scrollbar {
  width: 28px;
  background: linear-gradient(90deg, #cfcfcf, #dedede);
}
.scrollbar svg {
  display: block;
  width: 28px;
  height: 38px;
  background: #cbcbcb;
}
.thumb {
  height: 88px;
  border: 2px solid #808080;
  border-radius: 13px;
  background: linear-gradient(90deg, #c8c8c8, #a8a8a8);
}
</style>
